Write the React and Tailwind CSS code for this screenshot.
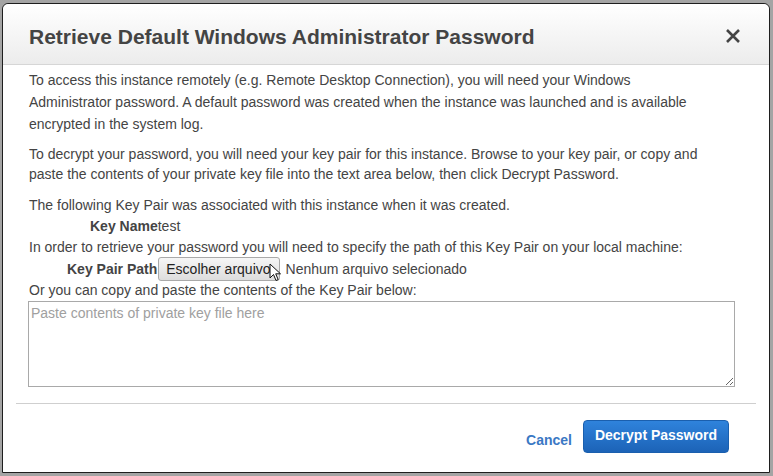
import { useState } from "react";

const App = () => {
  const [keyText, setKeyText] = useState("");

  return (
    <div className="w-[773px] h-[476px] bg-[#a4a4a4] pt-[3px] pl-[2px] overflow-hidden" style={{ fontFamily: '"Liberation Sans", Arial, sans-serif' }}>
      <div className="w-[768px] h-[470px] bg-white border border-[#1e1e1e] rounded-t-[6px] flex flex-col text-[#444]">
        {/* header */}
        <div className="h-[61px] flex items-center justify-between pl-[26px] pr-[28px] pt-[6px] rounded-t-[6px] border-b border-[#d6d6d6] bg-gradient-to-b from-white to-[#ececec]">
          <h1 className="text-[21px] font-bold text-[#444]">Retrieve Default Windows Administrator Password</h1>
          <svg width="16" height="16" viewBox="0 0 16 16" className="cursor-pointer -mt-[2px]">
            <path d="M2 2 L14 14 M14 2 L2 14" stroke="#444" strokeWidth="2.6" />
          </svg>
        </div>

        {/* body */}
        <div className="pl-[25px] pr-[34px] pt-[4px] text-[14px] leading-[22px]">
          <p className="pl-px pr-[20px]">
            To access this instance remotely (e.g. Remote Desktop Connection), you will need your Windows Administrator password. A
            default password was created when the instance was launched and is available encrypted in the system log.
          </p>
          <p className="pl-px mt-[9px] leading-[20px]">
            To decrypt your password, you will need your key pair for this instance. Browse to your key pair, or copy and paste the
            contents of your private key file into the text area below, then click Decrypt Password.
          </p>
          <div className="pl-px mt-[11px] leading-[21px]">
            <p>The following Key Pair was associated with this instance when it was created.</p>
            <p className="pl-[61px]">
              <span className="font-bold">Key Name</span>test
            </p>
            <p>In order to retrieve your password you will need to specify the path of this Key Pair on your local machine:</p>
            <div className="pl-[38px] flex items-center h-[22px] relative">
              <span className="font-bold">Key Pair Path</span>
              <button className="ml-px h-[24px] pl-[7px] pr-[8px] border border-[#a9a9a9] rounded-[3px] bg-gradient-to-b from-[#f6f6f6] to-[#dddddd] text-[#222] text-[14px] leading-none">
                Escolher arquivo
              </button>
              <span className="ml-[6px] text-[#444]">Nenhum arquivo selecionado</span>
              <svg width="13" height="20" viewBox="0 0 13 20" className="absolute left-[240px] top-[5px]">
                <path d="M1 1 L1 15 L4.5 11.5 L7 17.5 L9.2 16.6 L6.7 10.8 L11.5 10.8 Z" fill="white" stroke="#111" strokeWidth="1" strokeLinejoin="round" />
              </svg>
            </div>
            <p>Or you can copy and paste the contents of the Key Pair below:</p>
          </div>
          <textarea
            value={keyText}
            onChange={(e) => setKeyText(e.target.value)}
            placeholder="Paste contents of private key file here"
            className="block w-[707px] h-[86px] border border-[#a9a9a9] px-[2px] py-px text-[14px] leading-[20px] placeholder:text-[#a0a0a0] outline-none resize"
          />
        </div>

        {/* footer */}
        <div className="mx-[13px] mt-[16px] border-t border-[#cfcfcf]" />
        <div className="flex justify-end items-center pr-[40px] pt-[16px] gap-[11px]">
          <button className="text-[14px] font-bold text-[#3a78c4] mt-[8px]">Cancel</button>
          <button className="h-[33px] w-[146px] rounded-[4px] border border-[#1a5fae] bg-gradient-to-b from-[#2f83dc] to-[#1c63b7] text-white font-bold text-[14px] pb-[2px]">
            Decrypt Password
          </button>
        </div>
      </div>
    </div>
  );
};

export default App;
